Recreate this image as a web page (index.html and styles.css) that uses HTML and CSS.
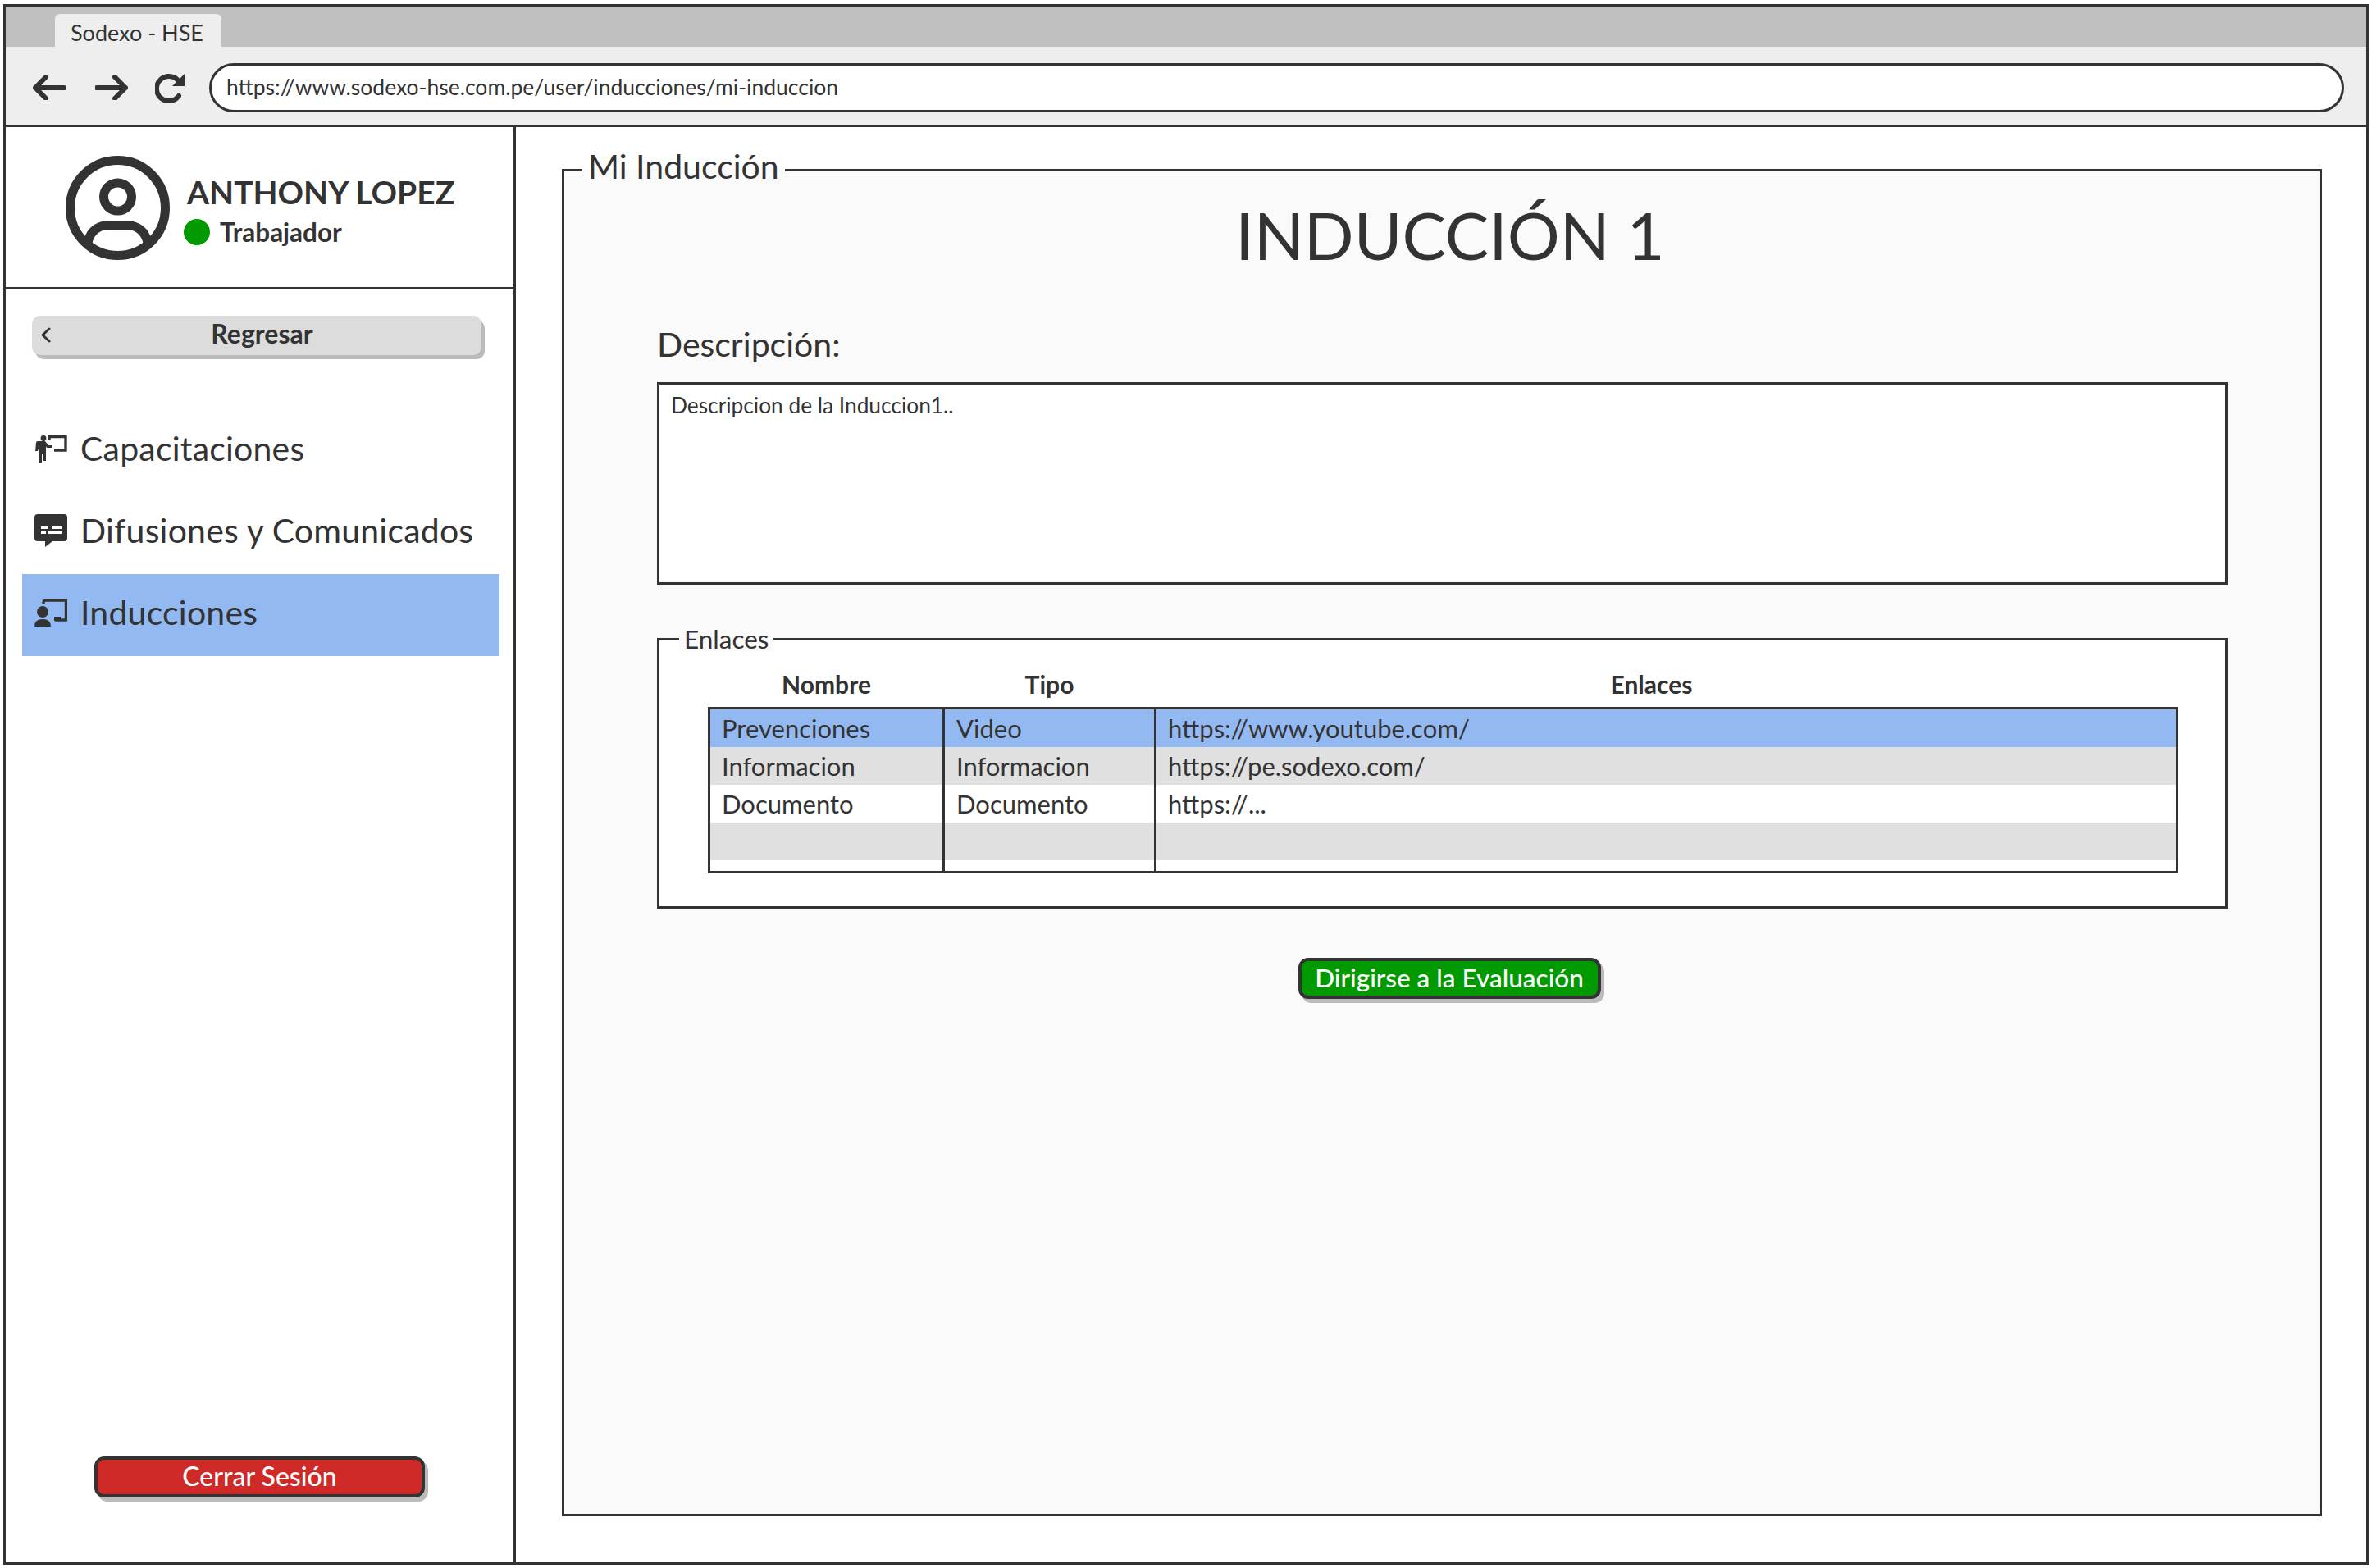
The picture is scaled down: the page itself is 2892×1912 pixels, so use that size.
FILE: index.html
```html
<!DOCTYPE html>
<html lang="es">
<head>
  <meta charset="UTF-8">
  <title>Sodexo - HSE</title>
  <link rel="stylesheet" href="styles.css">
</head>
<body>
  <div class="window">

    <!-- Barra del navegador -->
    <div class="tabbar">
      <div class="tab">Sodexo - HSE</div>
    </div>
    <div class="toolbar">
      <svg class="nav-arrow" width="40" height="30" viewBox="0 0 40 30"><path d="M38 15H3M16 2L3 15l13 13" fill="none" stroke="#333" stroke-width="6" stroke-linecap="round" stroke-linejoin="round"/></svg>
      <svg class="nav-arrow" width="40" height="30" viewBox="0 0 40 30"><path d="M2 15h35M24 2l13 13-13 13" fill="none" stroke="#333" stroke-width="6" stroke-linecap="round" stroke-linejoin="round"/></svg>
      <svg class="nav-reload" width="38" height="36" viewBox="0 0 38 36"><path d="M29 28A15 15 0 1 1 28 9" fill="none" stroke="#333" stroke-width="6" stroke-linecap="round"/><path d="M36 1v15H21z" fill="#333"/></svg>
      <div class="address">https://www.sodexo-hse.com.pe/user/inducciones/mi-induccion</div>
    </div>

    <div class="app">

      <!-- Menu lateral -->
      <aside class="sidebar">
        <div class="profile">
          <svg width="127" height="127" viewBox="0 0 127 127">
            <circle cx="63.5" cy="63.5" r="58" fill="none" stroke="#333" stroke-width="11"/>
            <circle cx="63.5" cy="50" r="17" fill="none" stroke="#333" stroke-width="11"/>
            <path d="M27 106C30 90 42 85 50 85H77C85 85 97 90 100 106" fill="none" stroke="#333" stroke-width="11"/>
          </svg>
          <div class="profile-info">
            <div class="profile-name">ANTHONY LOPEZ</div>
            <div class="profile-role"><span class="status-dot"></span>Trabajador</div>
          </div>
        </div>

        <div class="sidebar-body">
          <button class="back-btn">
            <svg class="back-icon" width="13" height="19" viewBox="0 0 13 19"><path d="M11 2L3 9.5l8 7.500" fill="none" stroke="#333" stroke-width="3" stroke-linecap="round" stroke-linejoin="round"/></svg>
            Regresar
          </button>

          <nav class="menu">
            <a class="menu-item">
              <svg width="40" height="34" viewBox="0 0 40 34">
                <circle cx="11" cy="4.5" r="3.4" fill="#333"/>
                <path d="M2 10q0-2 2-2h9l4 5h5v3h-7l-1-2v18h-3V23h-2v11H6V14l-2 6H1z" fill="#333"/>
                <path d="M18 6V2.500H38V19H24" fill="none" stroke="#333" stroke-width="3.4"/>
              </svg>
              <span>Capacitaciones</span>
            </a>
            <a class="menu-item">
              <svg width="40" height="40" viewBox="0 0 40 40">
                <path d="M4 0H36Q40 0 40 4V29Q40 33 36 33H22L13 40V33H4Q0 33 0 29V4Q0 0 4 0Z" fill="#333"/>
                <path d="M8 15h9v3H8zM21 15h12v3H21zM8 21h6v3H8zM17 21h16v3H17z" fill="#fff"/>
              </svg>
              <span>Difusiones y Comunicados</span>
            </a>
            <a class="menu-item active">
              <svg width="40" height="34" viewBox="0 0 40 34">
                <path d="M11 6V5Q11 2 14 2H38.500V26H25" fill="none" stroke="#333" stroke-width="3.4"/>
                <path d="M24 27v-5h8v5z" fill="#333"/>
                <circle cx="10" cy="16" r="7" fill="#333"/>
                <path d="M0 34Q0 25 10 25Q20 25 20 34z" fill="#333"/>
              </svg>
              <span>Inducciones</span>
            </a>
          </nav>

          <button class="logout-btn">Cerrar Sesión</button>
        </div>
      </aside>

      <!-- Contenido -->
      <main class="content">
        <fieldset class="panel">
          <legend>Mi Inducción</legend>
          <h1 class="title">INDUCCIÓN 1</h1>

          <div class="panel-body">
            <h2 class="desc-label">Descripción:</h2>
            <div class="desc-box">Descripcion de la Induccion1..</div>

            <fieldset class="links">
              <legend>Enlaces</legend>
              <table class="links-table">
                <colgroup>
                  <col class="col-name">
                  <col class="col-type">
                  <col>
                </colgroup>
                <thead>
                  <tr><th>Nombre</th><th>Tipo</th><th class="th-link">Enlaces</th></tr>
                </thead>
                <tbody>
                  <tr class="row-gap-top"><td></td><td></td><td></td></tr>
                  <tr class="row-selected"><td>Prevenciones</td><td>Video</td><td>https://www.youtube.com/</td></tr>
                  <tr class="row-alt"><td>Informacion</td><td>Informacion</td><td>https://pe.sodexo.com/</td></tr>
                  <tr><td>Documento</td><td>Documento</td><td>https://...</td></tr>
                  <tr class="row-alt"><td></td><td></td><td></td></tr>
                  <tr class="row-gap-bottom"><td></td><td></td><td></td></tr>
                </tbody>
              </table>
            </fieldset>

            <div class="actions">
              <button class="eval-btn">Dirigirse a la Evaluación</button>
            </div>
          </div>
        </fieldset>
      </main>

    </div>
  </div>
</body>
</html>
```

FILE: styles.css
```css
* {
  box-sizing: border-box;
}

body {
  margin: 0;
  background: #fff;
  color: #333;
  font-family: "Lato", sans-serif;
}

.window {
  height: 1903px;
  margin: 5px 4px 0 4px;
  border: 3px solid #333;
  display: flex;
  flex-direction: column;
}

/* Barra del navegador */
.tabbar {
  height: 49px;
  background: #c0c0c0;
  padding: 9px 0 0 60px;
  flex: none;
}

.tab {
  width: 203px;
  height: 40px;
  background: #eee;
  border-radius: 6px 6px 0 0;
  padding-left: 19px;
  font-size: 27px;
  line-height: 46px;
}

.toolbar {
  height: 98px;
  background: #eee;
  border-bottom: 3px solid #333;
  display: flex;
  align-items: center;
  padding: 4px 27px 0 33px;
  flex: none;
}

.nav-arrow {
  margin-right: 36px;
}

.nav-reload {
  margin-right: 28px;
  margin-left: -3px;
}

.address {
  flex: 1;
  height: 60px;
  background: #fff;
  border: 3px solid #333;
  border-radius: 30px;
  padding-left: 18px;
  font-size: 26.500px;
  line-height: 53px;
}

.app {
  flex: 1;
  display: flex;
  min-height: 0;
}

/* Menu lateral */
.sidebar {
  width: 622px;
  border-right: 3px solid #333;
  display: flex;
  flex-direction: column;
  flex: none;
}

.profile {
  height: 198px;
  border-bottom: 3px solid #333;
  display: flex;
  align-items: center;
  padding: 2px 0 0 73px;
  gap: 17px;
  flex: none;
}

.profile-info {
  margin-top: 5px;
}

.profile-name {
  font-size: 39px;
  font-weight: 700;
  line-height: 44px;
  margin-left: 4px;
}

.profile-role {
  display: flex;
  align-items: center;
  font-size: 31.500px;
  font-weight: 700;
  line-height: 36px;
  margin-top: 9px;
}

.status-dot {
  width: 32px;
  height: 32px;
  border-radius: 50%;
  background: #090;
  margin-right: 12px;
}

.sidebar-body {
  flex: 1;
  display: flex;
  flex-direction: column;
  padding: 32px 0 79px 0;
}

.back-btn {
  position: relative;
  width: 548px;
  height: 48px;
  margin-left: 32px;
  border: none;
  border-radius: 10px;
  background: #dcdcdc;
  box-shadow: 4px 5px 0 #bbb;
  color: #333;
  font-family: inherit;
  font-size: 32px;
  font-weight: 700;
  padding: 0 0 6px 13px;
  flex: none;
}

.back-icon {
  position: absolute;
  left: 10px;
  top: 14px;
}

.menu {
  margin-top: 67px;
  display: flex;
  flex-direction: column;
}

.menu-item {
  height: 100px;
  margin: 0 17px 0 20px;
  padding: 0 0 7px 15px;
  display: flex;
  align-items: center;
  gap: 16px;
  font-size: 41px;
  letter-spacing: 0.2px;
}

.menu-item svg {
  flex: none;
}

.menu-item.active {
  background: #92b9f1;
}

.logout-btn {
  width: 403px;
  height: 50px;
  margin: auto 0 0 108px;
  border: 4px solid #333;
  border-radius: 12px;
  background: #cf2a27;
  box-shadow: 4px 5px 0 #bbb;
  color: #fff;
  font-family: inherit;
  font-size: 32px;
  font-weight: 500;
  padding: 0 0 3px 0;
  flex: none;
}

/* Contenido */
.content {
  flex: 1;
  min-width: 0;
  padding: 25px 54px 56px 56px;
}

.panel {
  height: 100%;
  margin: 0;
  padding: 0;
  border: 3px solid #333;
  background: #fafafa;
}

.panel > legend {
  margin-left: 22px;
  padding: 0 7px 8px 7px;
  font-size: 41px;
  line-height: 46px;
}

.title {
  margin: 2px 0 0 0;
  padding-left: 20px;
  text-align: center;
  font-size: 80px;
  font-weight: 400;
  line-height: 100px;
}

.panel-body {
  padding: 0 112px 0 113px;
}

.desc-label {
  margin: 61px 0 0 0;
  font-size: 41px;
  font-weight: 400;
  line-height: 46px;
}

.desc-box {
  height: 247px;
  margin-top: 23px;
  background: #fff;
  border: 3px solid #333;
  padding: 9px 14px;
  font-size: 26.300px;
  line-height: 32px;
}

.links {
  height: 345px;
  margin: 50px 0 0 0;
  padding: 0 57px 0 59px;
  border: 3px solid #333;
  background: #fff;
}

.links > legend {
  margin-left: -35px;
  padding: 0 6px;
  background: #fafafa;
  font-size: 31.500px;
  line-height: 32px;
}

.links-table {
  width: 1793px;
  table-layout: fixed;
  border-collapse: collapse;
  margin-top: 20px;
  font-size: 31px;
}

.col-name {
  width: 286px;
}

.col-type {
  width: 258px;
}

.links-table th {
  height: 48px;
  padding: 0 0 8px 0;
  font-size: 30px;
  font-weight: 700;
}

.links-table .th-link {
  padding-right: 36px;
}

.links-table tbody {
  border: 3px solid #333;
}

.links-table td {
  height: 46px;
  padding: 0 0 0 14px;
  white-space: nowrap;
}

.links-table td + td {
  border-left: 3px solid #333;
}

.links-table .row-gap-top td {
  height: 2px;
}

.links-table .row-gap-bottom td {
  height: 14px;
}

.row-selected {
  background: #92b9f1;
}

.row-alt {
  background: #e0e0e0;
}

.actions {
  margin-top: 60px;
  padding-left: 17px;
  display: flex;
  justify-content: center;
}

.eval-btn {
  width: 369px;
  height: 50px;
  border: 4px solid #333;
  border-radius: 12px;
  background: #090;
  box-shadow: 4px 5px 0 #bbb;
  color: #fff;
  font-family: inherit;
  font-size: 31.500px;
  font-weight: 500;
  padding: 0 0 3px 0;
}
```
